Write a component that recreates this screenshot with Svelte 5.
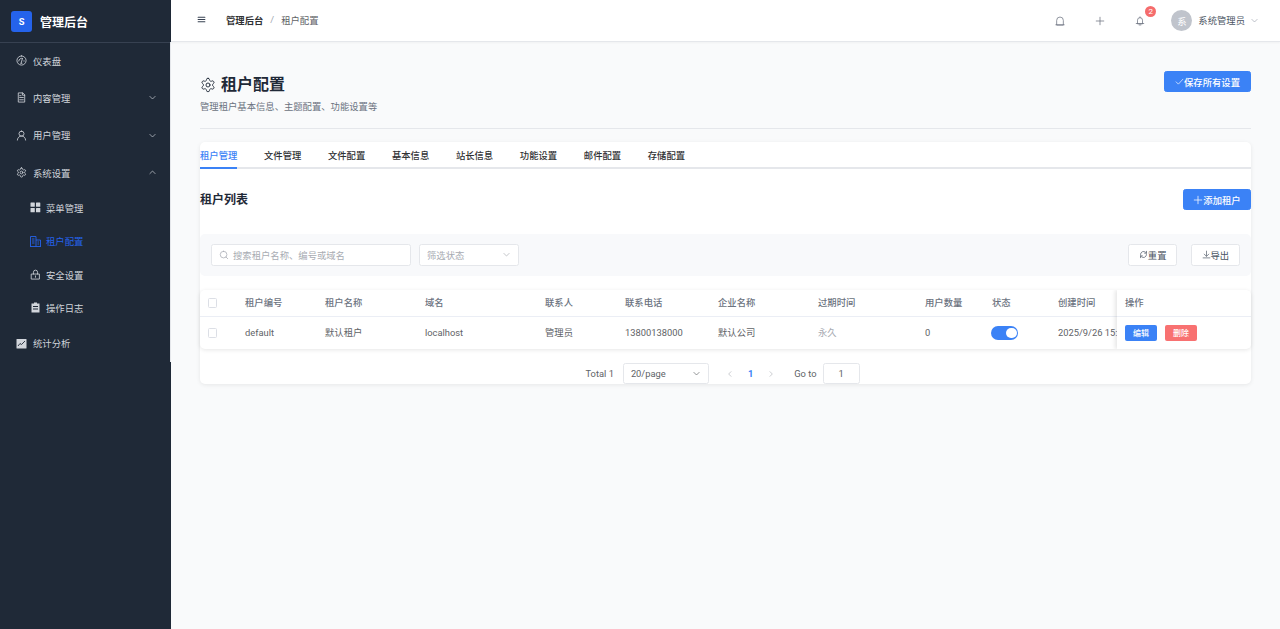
<script>
  const gear = 'M12.22 2h-.44a2 2 0 0 0-2 2v.18a2 2 0 0 1-1 1.73l-.43.25a2 2 0 0 1-2 0l-.15-.08a2 2 0 0 0-2.73.73l-.22.38a2 2 0 0 0 .73 2.73l.15.1a2 2 0 0 1 1 1.72v.51a2 2 0 0 1-1 1.74l-.15.09a2 2 0 0 0-.73 2.73l.22.38a2 2 0 0 0 2.73.73l.15-.08a2 2 0 0 1 2 0l.43.25a2 2 0 0 1 1 1.73V20a2 2 0 0 0 2 2h.44a2 2 0 0 0 2-2v-.18a2 2 0 0 1 1-1.73l.43-.25a2 2 0 0 1 2 0l.15.08a2 2 0 0 0 2.73-.73l.22-.39a2 2 0 0 0-.73-2.73l-.15-.08a2 2 0 0 1-1-1.74v-.5a2 2 0 0 1 1-1.74l.15-.09a2 2 0 0 0 .73-2.73l-.22-.38a2 2 0 0 0-2.73-.73l-.15.08a2 2 0 0 1-2 0l-.43-.25a2 2 0 0 1-1-1.73V4a2 2 0 0 0-2-2zM15 12a3 3 0 1 1-6 0 3 3 0 0 1 6 0z';
  const icons = {
    gear,
    gauge: 'M12 2a10 10 0 1 0 0 20 10 10 0 0 0 0-20zM6 13a6 6 0 0 1 8-5.600M18 13h-1M11 18l3-10M11 18h2',
    doc: 'M14 2H5v20h14V7zM14 2v5h5M8 12h8M8 17h8M8 8h3',
    user: 'M12 2.500a5.500 5.500 0 1 0 0 11 5.500 5.500 0 0 0 0-11zM3 22a9 9 0 0 1 18 0',
    lock: 'M3.500 11h17v11h-17zM7.500 11V7a4.500 4.500 0 0 1 9 0v4M12 15v3',
    down: 'M5 9l7 7 7-7',
    up: 'M5 15l7-7 7 7',
    left: 'M15 5l-7 7 7 7',
    right: 'M9 5l7 7-7 7',
    home: 'M4 21V10.500a8 8 0 0 1 16 0V21zM2 21h20',
    plus: 'M12 3v18M3 12h18',
    bell: 'M6 18V10a6 6 0 0 1 12 0v8zM3 18h18M10 21.500h4M12 2v2',
    search: 'M11 3a8 8 0 1 0 0 16 8 8 0 0 0 0-16zM21 21l-4.300-4.300',
    check: 'M3 13l6 6L21 6',
    refresh: 'M4 12a8 8 0 0 1 13.500-5.800L20 8.500M20 3.500v5h-5M20 12a8 8 0 0 1-13.500 5.800L4 15.500M4 20.500v-5h5',
    download: 'M3 21h18M12 3v13M6 11l6 6 6-6',
    menu: 'M3 6h18M3 12h18M3 18h18'
  };

  const tabs = ['租户管理', '文件管理', '文件配置', '基本信息', '站长信息', '功能设置', '邮件配置', '存储配置'];
  const columns = [
    { label: '租户编号', width: 80, value: 'default' },
    { label: '租户名称', width: 100, value: '默认租户' },
    { label: '域名', width: 120, value: 'localhost' },
    { label: '联系人', width: 80, value: '管理员' },
    { label: '联系电话', width: 93, value: '13800138000' },
    { label: '企业名称', width: 100, value: '默认公司' },
    { label: '过期时间', width: 107, value: '永久', muted: true },
    { label: '用户数量', width: 67, value: '0' },
    { label: '状态', width: 66, toggle: true },
    { label: '创建时间', width: 120, value: '2025/9/26 15:25:30' }
  ];
</script>

{#snippet icon(name, size, cls = '')}
  <svg class="icon {cls}" width={size} height={size} viewBox="0 0 24 24" fill="none" stroke="currentColor" stroke-width="1.8" stroke-linecap="round" stroke-linejoin="round">
    <path d={icons[name]} />
  </svg>
{/snippet}

<div class="layout">
  <aside class="sidebar">
    <div class="logo">
      <span class="logo-mark">S</span>
      <span class="logo-text">管理后台</span>
    </div>
    <nav class="menu">
      <div class="menu-item">{@render icon('gauge', 11)}<span>仪表盘</span></div>
      <div class="menu-item">{@render icon('doc', 11)}<span>内容管理</span>{@render icon('down', 9, 'chev')}</div>
      <div class="menu-item">{@render icon('user', 11)}<span>用户管理</span>{@render icon('down', 9, 'chev')}</div>
      <div class="menu-item">{@render icon('gear', 11)}<span>系统设置</span>{@render icon('up', 9, 'chev')}</div>
      <div class="sub-item">
        <svg class="icon" width="11" height="11" viewBox="0 0 11 11" fill="currentColor"><rect x="0.500" y="0.500" width="4.300" height="4.300" rx="0.500" /><rect x="6" y="0.500" width="4.300" height="4.300" rx="0.500" /><rect x="0.500" y="6" width="4.300" height="4.300" rx="0.500" /><rect x="6" y="6" width="4.300" height="4.300" rx="0.500" /></svg>
        <span>菜单管理</span>
      </div>
      <div class="sub-item active">
        <svg class="icon" width="11" height="11" viewBox="0 0 11 11" fill="none" stroke="currentColor" stroke-width="0.900"><path d="M0.500 10.500V0.500h5.500v10M6 4h4.500v6.500M0 10.500h11M2 3h2.500M2 5h2.500M2 7h2.500M7.500 6h1.500M7.500 8h1.500" /></svg>
        <span>租户配置</span>
      </div>
      <div class="sub-item">
        {@render icon('lock', 11)}
        <span>安全设置</span>
      </div>
      <div class="sub-item">
        <svg class="icon" width="11" height="11" viewBox="0 0 11 11" fill="currentColor"><path d="M1.500 1.500h2.500V0.500h3v1h2.500v9h-8zM3 4v1h5V4zM3 6.500v1h5v-1z" fill-rule="evenodd" /></svg>
        <span>操作日志</span>
      </div>
      <div class="menu-item">
        <svg class="icon" width="11" height="11" viewBox="0 0 11 11"><rect x="0.500" y="1" width="10" height="9.500" rx="0.500" fill="currentColor" /><path d="M2 8l2-2.500 1.500 1L9 3" stroke="#1f2937" stroke-width="0.900" fill="none" /></svg>
        <span>统计分析</span>
      </div>
    </nav>
  </aside>

  <div class="body">
    <header class="topbar">
      <div class="crumbs">
        {@render icon('menu', 9, 'burger')}
        <strong>管理后台</strong>
        <span class="sep">/</span>
        <span class="crumb">租户配置</span>
      </div>
      <div class="top-actions">
        {@render icon('home', 10)}
        {@render icon('plus', 10)}
        <div class="bell">
          {@render icon('bell', 10)}
          <span class="badge">2</span>
        </div>
        <div class="account">
          <span class="avatar">系</span>
          <span class="account-name">系统管理员</span>
          {@render icon('down', 9, 'caret')}
        </div>
      </div>
    </header>

    <main class="content">
      <div class="page-head">
        <div>
          <h1>{@render icon('gear', 16, 'title-icon')}租户配置</h1>
          <p>管理租户基本信息、主题配置、功能设置等</p>
        </div>
        <button class="btn primary save">{@render icon('check', 9)}保存所有设置</button>
      </div>

      <section class="card">
        <div class="tabs">
          {#each tabs as tab, i (tab)}
            <div class="tab" class:current={i === 0}>{tab}</div>
          {/each}
        </div>

        <div class="list-head">
          <h2>租户列表</h2>
          <button class="btn primary add">{@render icon('plus', 10)}添加租户</button>
        </div>

        <div class="toolbar">
          <div class="field search">{@render icon('search', 10)}<span>搜索租户名称、编号或域名</span></div>
          <div class="field status"><span>筛选状态</span>{@render icon('down', 9)}</div>
          <div class="spacer"></div>
          <button class="btn plain">{@render icon('refresh', 9)}重置</button>
          <button class="btn plain export">{@render icon('download', 9)}导出</button>
        </div>

        <div class="table-box">
          <div class="table-scroll">
            <table>
              <colgroup>
                <col style="width: 37px" />
                {#each columns as col (col.label)}
                  <col style="width: {col.width}px" />
                {/each}
              </colgroup>
              <thead>
                <tr>
                  <th><span class="checkbox"></span></th>
                  {#each columns as col (col.label)}
                    <th>{col.label}</th>
                  {/each}
                </tr>
              </thead>
              <tbody>
                <tr>
                  <td><span class="checkbox"></span></td>
                  {#each columns as col (col.label)}
                    <td class:muted={col.muted}>
                      {#if col.toggle}
                        <span class="toggle"></span>
                      {:else}
                        {col.value}
                      {/if}
                    </td>
                  {/each}
                </tr>
              </tbody>
            </table>
          </div>
          <div class="fixed-col">
            <div class="fixed-head">操作</div>
            <div class="fixed-cell">
              <button class="mini blue">编辑</button>
              <button class="mini red">删除</button>
            </div>
          </div>
        </div>

        <div class="pager">
          <span class="total">Total 1</span>
          <div class="field size"><span>20/page</span>{@render icon('down', 9)}</div>
          {@render icon('left', 8, 'pg-arrow first')}
          <span class="pg-num">1</span>
          {@render icon('right', 8, 'pg-arrow')}
          <span class="goto">Go to</span>
          <div class="field jump">1</div>
        </div>
      </section>
    </main>
  </div>
</div>

<style>
  :global(body) {
    margin: 0;
    background: #f9fafb;
    font-family: Roboto, "Noto Sans CJK SC", "Liberation Sans", sans-serif;
    font-size: 9.33px;
    color: #374151;
  }

  h1, h2, p {
    margin: 0;
  }

  .icon {
    flex: none;
    display: block;
  }

  .layout {
    display: flex;
    height: 629px;
    overflow: hidden;
  }

  .sidebar {
    width: 171px;
    flex: none;
    background: #1f2937;
  }

  .logo {
    height: 42px;
    box-sizing: border-box;
    display: flex;
    align-items: center;
    gap: 8px;
    padding-left: 11px;
    box-shadow: 0 1px 0 #374151;
  }

  .logo-mark {
    width: 21px;
    height: 21px;
    border-radius: 3px;
    background: #2563eb;
    color: #fff;
    font-size: 9.33px;
    font-weight: 700;
    display: flex;
    align-items: center;
    justify-content: center;
  }

  .logo-text {
    color: #fff;
    font-size: 12px;
    font-weight: 600;
  }

  .menu {
    height: 320px;
    box-sizing: border-box;
    border-right: 1px solid #e5e7eb;
    color: #d1d5db;
  }

  .menu-item,
  .sub-item {
    display: flex;
    align-items: center;
  }

  .menu-item {
    height: 37.33px;
    padding-left: 16px;
    gap: 6px;
  }

  .sub-item {
    height: 33.33px;
    padding-left: 30px;
    gap: 5px;
  }

  .sub-item.active {
    color: #2563eb;
  }

  .menu :global(.chev) {
    margin-left: auto;
    margin-right: 13px;
  }

  .body {
    flex: 1;
    min-width: 0;
  }

  .topbar {
    height: 42px;
    box-sizing: border-box;
    background: #fff;
    border-bottom: 1px solid #e5e7eb;
    box-shadow: 0 1px 2px rgba(0, 0, 0, 0.04);
    display: flex;
    align-items: center;
    justify-content: space-between;
    position: relative;
  }

  .crumbs {
    display: flex;
    align-items: center;
    padding-left: 26px;
    padding-bottom: 2px;
    color: #4b5563;
  }

  .crumbs :global(.burger) {
    margin-right: 20px;
    color: #374151;
    stroke-width: 2.8;
  }

  .crumbs strong {
    font-weight: 600;
    color: #303133;
  }

  .sep {
    margin: 0 7px;
    color: #9ca3af;
  }

  .crumb {
    color: #606266;
  }

  .top-actions {
    display: flex;
    align-items: center;
    gap: 30px;
    color: #6b7280;
    padding-right: 21px;
  }

  .bell {
    position: relative;
  }

  .badge {
    position: absolute;
    left: 10px;
    top: -10px;
    width: 11px;
    height: 11px;
    border-radius: 50%;
    background: #f56c6c;
    color: #fff;
    font-size: 8px;
    display: flex;
    align-items: center;
    justify-content: center;
  }

  .account {
    display: flex;
    align-items: center;
    margin-left: -4px;
  }

  .avatar {
    width: 21px;
    height: 21px;
    border-radius: 50%;
    background: #c0c4cc;
    color: #fff;
    display: flex;
    align-items: center;
    justify-content: center;
  }

  .account-name {
    margin: 0 5px 2px 6px;
    color: #4b5563;
  }

  .account :global(.caret) {
    color: #9ca3af;
  }

  .content {
    padding: 29px 29px 0;
  }

  .page-head {
    display: flex;
    justify-content: space-between;
    align-items: flex-start;
    height: 57px;
    border-bottom: 1px solid #e5e7eb;
    margin-bottom: 13px;
  }

  h1 {
    display: flex;
    align-items: center;
    font-size: 16px;
    line-height: 24px;
    font-weight: 600;
    color: #1f2937;
    margin-top: 2px;
  }

  h1 :global(.title-icon) {
    margin-right: 5px;
    stroke-width: 1.4;
  }

  .page-head p {
    color: #6b7280;
    line-height: 20px;
  }

  .btn {
    height: 21.330px;
    border-radius: 2.500px;
    font: inherit;
    display: inline-flex;
    align-items: center;
    justify-content: center;
    padding: 0;
    cursor: pointer;
  }

  .primary {
    background: #3b82f6;
    border: 1px solid #3b82f6;
    color: #fff;
    font-weight: 500;
  }

  .plain {
    width: 49.330px;
    background: #fff;
    border: 1px solid #e5e7eb;
    color: #4b5563;
  }

  .save {
    width: 87px;
  }

  .add {
    width: 68px;
  }

  .export {
    margin-left: 13.330px;
  }

  .card {
    background: #fff;
    border-radius: 5px;
    box-shadow: 0 1px 4px rgba(0, 0, 0, 0.08);
    height: 242px;
  }

  .tabs {
    display: flex;
    gap: 26.670px;
    height: 25px;
    border-bottom: 2px solid #e5e7eb;
  }

  .tab {
    box-sizing: border-box;
    height: 27px;
    line-height: 28px;
    color: #303133;
    font-weight: 500;
  }

  .tab.current {
    color: #3b82f6;
    border-bottom: 2px solid #3b82f6;
  }

  .list-head {
    display: flex;
    align-items: center;
    justify-content: space-between;
    margin-top: 20px;
    margin-bottom: 23.670px;
  }

  h2 {
    font-size: 12px;
    font-weight: 600;
    color: #1f2937;
    margin-bottom: 2px;
  }

  .toolbar {
    display: flex;
    align-items: center;
    height: 42px;
    padding: 0 11px;
    background: #f8f9fb;
    border-radius: 5px;
    margin-bottom: 14px;
  }

  .spacer {
    flex: 1;
  }

  .field {
    box-sizing: border-box;
    height: 21.330px;
    background: #fff;
    border: 1px solid #e5e7eb;
    border-radius: 2.500px;
    display: flex;
    align-items: center;
    color: #a8abb2;
  }

  .search {
    width: 200px;
    padding-left: 7px;
    gap: 4px;
  }

  .status {
    width: 100px;
    margin-left: 8px;
    padding: 0 7px;
    justify-content: space-between;
  }

  .table-box {
    display: flex;
    background: #fff;
    border-radius: 5px;
    box-shadow: 0 1px 4px rgba(0, 0, 0, 0.1);
    height: 59px;
    overflow: hidden;
    margin-bottom: 14px;
  }

  .table-scroll {
    flex: 1;
    min-width: 0;
    overflow: hidden;
  }

  table {
    border-collapse: collapse;
    table-layout: fixed;
    width: 970px;
    color: #606266;
  }

  th, td {
    text-align: left;
    padding: 0 8px;
    white-space: nowrap;
    overflow: hidden;
    line-height: 13px;
  }

  th {
    height: 26px;
    font-weight: 500;
    border-bottom: 1px solid #ebeef5;
    color: #6b7280;
  }

  td {
    height: 32px;
  }

  td.muted {
    color: #a8abb2;
  }

  .checkbox {
    display: block;
    width: 9.330px;
    height: 9.330px;
    box-sizing: border-box;
    background: #fff;
    border: 1px solid #dcdfe6;
    border-radius: 1.500px;
  }

  .toggle {
    display: block;
    width: 27px;
    height: 13.500px;
    margin-left: -1px;
    border-radius: 7px;
    background: #3b82f6;
    position: relative;
  }

  .toggle::after {
    content: '';
    position: absolute;
    right: 1.500px;
    top: 1.500px;
    width: 10.500px;
    height: 10.500px;
    border-radius: 50%;
    background: #fff;
  }

  .fixed-col {
    width: 134px;
    flex: none;
    box-shadow: -2px 0 4px rgba(0, 0, 0, 0.1);
    background: #fff;
    color: #6b7280;
  }

  .fixed-head {
    height: 26px;
    line-height: 26px;
    padding-left: 8px;
    font-weight: 500;
    border-bottom: 1px solid #ebeef5;
  }

  .fixed-cell {
    height: 32px;
    display: flex;
    align-items: center;
    gap: 8px;
    padding-left: 8px;
  }

  .mini {
    width: 32px;
    height: 16px;
    border: 0;
    border-radius: 2px;
    padding: 0;
    color: #fff;
    font: inherit;
    font-size: 8px;
    font-weight: 500;
  }

  .blue {
    background: #3b82f6;
  }

  .red {
    background: #f87171;
  }

  .pager {
    display: flex;
    align-items: center;
    justify-content: center;
    color: #606266;
    padding-right: 6px;
  }

  .total {
    margin-right: 9px;
  }

  .size {
    width: 86px;
    padding: 0 7px;
    justify-content: space-between;
    color: #606266;
  }

  .pager :global(.pg-arrow) {
    color: #a8abb2;
    margin: 0 6px;
  }

  .pager :global(.first) {
    margin-left: 17px;
  }

  .pg-num {
    color: #3b82f6;
    font-weight: 700;
    margin: 0 8px;
  }

  .goto {
    margin: 0 6px 0 13px;
  }

  .jump {
    width: 37px;
    justify-content: center;
    color: #606266;
  }
</style>
